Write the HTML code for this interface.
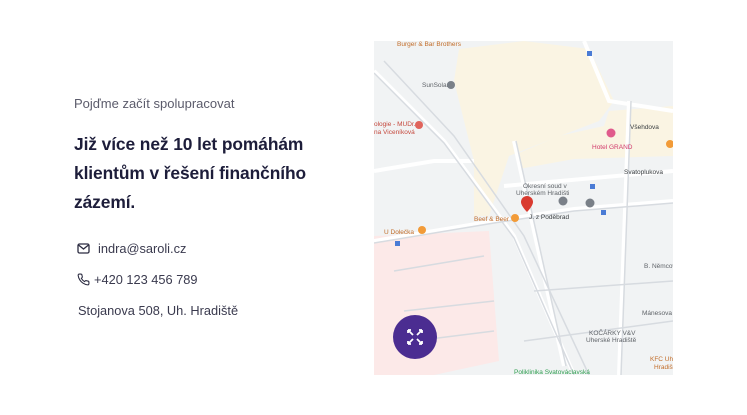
<!DOCTYPE html>
<html><head><meta charset="utf-8"><style>
body{margin:0;width:747px;height:415px;background:#fff;font-family:"Liberation Sans",sans-serif;position:relative;overflow:hidden}
.t{position:absolute;white-space:nowrap}
.sub{left:74px;top:96px;font-size:13px;color:#5b5b6b}
.h{left:74px;top:130px;font-size:17.4px;font-weight:bold;color:#1d1d3a;line-height:29px;letter-spacing:-0.1px}
.c{font-size:12.8px;color:#3a3a4e}
</style></head><body>
<div class="t sub">Pojďme začít spolupracovat</div>
<div class="t h">Již více než 10 let pomáhám<br>klientům v řešení finančního<br>zázemí.</div>
<svg class="t" style="left:77px;top:243px" width="13" height="11" viewBox="0 0 13 11"><rect x="1" y="1" width="11" height="9" rx="1.5" fill="none" stroke="#2b2b40" stroke-width="1.3"/><path d="M1.5 2 6.5 6 11.5 2" fill="none" stroke="#2b2b40" stroke-width="1.3"/></svg>
<div class="t c" style="left:98px;top:241px">indra@saroli.cz</div>
<svg class="t" style="left:77px;top:273px" width="13" height="13" viewBox="0 0 24 24"><path d="M22 16.9v3a2 2 0 0 1-2.2 2 19.8 19.8 0 0 1-8.6-3.1 19.5 19.5 0 0 1-6-6A19.8 19.8 0 0 1 2.1 4.2 2 2 0 0 1 4.1 2h3a2 2 0 0 1 2 1.7c.1 1 .4 1.9.7 2.8a2 2 0 0 1-.5 2.1L8 9.9a16 16 0 0 0 6 6l1.3-1.3a2 2 0 0 1 2.1-.4c.9.3 1.8.6 2.8.7a2 2 0 0 1 1.7 2z" fill="none" stroke="#2b2b40" stroke-width="2"/></svg>
<div class="t c" style="left:94px;top:272px">+420 123 456 789</div>
<div class="t c" style="left:78px;top:303px">Stojanova 508, Uh. Hradiště</div>
<svg class="t" style="left:374px;top:41px" width="299" height="334" viewBox="0 0 299 334">
<rect width="299" height="334" fill="#f1f3f4"/>
<path d="M85 8 L150 0 L215 8 L240 60 L225 80 L160 105 L135 115 L115 175 L100 175 L100 120 L80 40 Z" fill="#faf4e3"/>
<path d="M145 112 L185 95 L230 85 L235 70 L299 65 L299 115 L200 118 L145 128 Z" fill="#faf4e3"/>
<path d="M0 195 L115 190 L125 320 L60 334 L0 334 Z" fill="#fce9e8"/>
<g fill="none" stroke="#fff" stroke-width="4">
<path d="M0 30 L70 100 L140 195 L200 334"/>
<path d="M0 200 L120 180 L200 168 L299 160"/>
<path d="M140 100 L190 325"/>
<path d="M255 60 L245 334"/>
<path d="M130 145 L299 130"/>
<path d="M0 130 L60 120 L100 120"/>
<path d="M210 0 L235 60 L299 70"/>
</g>
<g fill="none" stroke="#d7dbe0" stroke-width="1.5">
<path d="M0 32 L70 102 L140 197 L200 334"/><path d="M10 20 L80 95 L150 195 L215 334"/>
<path d="M0 202 L120 182 L200 170 L299 162"/><path d="M142 100 L192 325"/><path d="M257 60 L247 334"/>
<path d="M160 250 L299 240"/><path d="M150 300 L299 280"/><path d="M20 230 L110 215"/><path d="M30 270 L120 260"/><path d="M40 300 L120 290"/>
</g>
<g font-size="6.5" font-family="Liberation Sans,sans-serif">
<text x="23" y="5" fill="#c26d2a">Burger &amp; Bar Brothers</text>
<text x="48" y="46" fill="#5f6368">SunSolar</text>
<circle cx="77" cy="44" r="4" fill="#7a8088"/>
<text x="0" y="85" fill="#c5483d">ologie - MUDr.</text>
<text x="0" y="93" fill="#c5483d">na Viceníková</text>
<circle cx="45" cy="84" r="4" fill="#e0635b"/>
<text x="256" y="88" fill="#3c4043">Všehdova</text>
<circle cx="237" cy="92" r="4.5" fill="#e05b8c"/>
<text x="218" y="108" fill="#d1386a">Hotel GRAND</text>
<circle cx="296" cy="103" r="4" fill="#f29b38"/>
<text x="149" y="147" fill="#5f6368">Okresní soud v</text>
<text x="142" y="154" fill="#5f6368">Uherském Hradišti</text>
<circle cx="189" cy="160" r="4.5" fill="#7a8088"/>
<circle cx="216" cy="162" r="4.5" fill="#7a8088"/>
<text x="100" y="180" fill="#c26d2a">Beef &amp; Beer</text>
<circle cx="141" cy="177" r="4" fill="#f29b38"/>
<text x="10" y="193" fill="#c26d2a">U Dolečka</text>
<circle cx="48" cy="189" r="4" fill="#f29b38"/>
<text x="155" y="178" fill="#3c4043">J. z Poděbrad</text>
<text x="250" y="133" fill="#3c4043">Svatoplukova</text>
<text x="270" y="227" fill="#5f6368">B. Němcové</text>
<text x="268" y="274" fill="#5f6368">Mánesova</text>
<text x="215" y="294" fill="#5f6368">KOČÁRKY V&amp;V</text>
<text x="212" y="301" fill="#5f6368">Uherské Hradiště</text>
<text x="276" y="320" fill="#c26d2a">KFC Uhe</text>
<text x="280" y="328" fill="#c26d2a">Hradišt</text>
<text x="140" y="333" fill="#2f9e50">Poliklinika Svatováclavská</text>
</g>
<path d="M153 155 a6 6 0 0 1 6 6 c0 4-6 10-6 10 s-6-6-6-10 a6 6 0 0 1 6-6z" fill="#d93b30"/>
<rect x="213" y="10" width="5" height="5" fill="#4a7bd5"/><rect x="216" y="143" width="5" height="5" fill="#4a7bd5"/><rect x="227" y="169" width="5" height="5" fill="#4a7bd5"/><rect x="21" y="200" width="5" height="5" fill="#4a7bd5"/>
<circle cx="41" cy="296" r="22" fill="#4b2d91"/>
<g stroke="#fff" stroke-width="1.8" fill="none"><path d="M34 289 l5 5 M34 289 h3 M34 289 v3"/><path d="M48 289 l-5 5 M48 289 h-3 M48 289 v3"/><path d="M34 303 l5-5 M34 303 h3 M34 303 v-3"/><path d="M48 303 l-5-5 M48 303 h-3 M48 303 v-3"/></g>
</svg>
</body></html>
